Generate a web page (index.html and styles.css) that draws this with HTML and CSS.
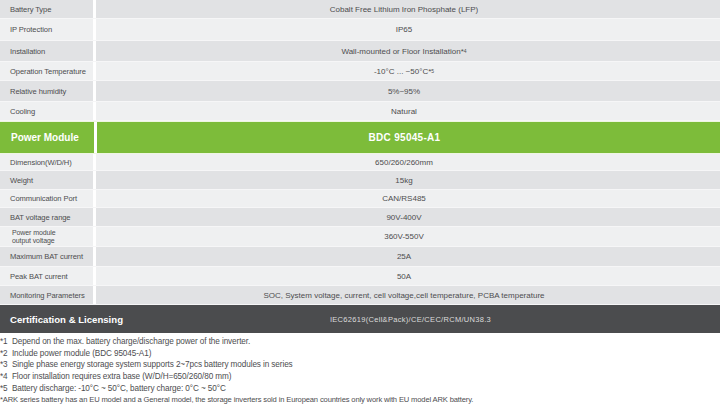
FILE: index.html
```html
<!DOCTYPE html>
<html>
<head>
<meta charset="utf-8">
<link rel="stylesheet" href="styles.css">
</head>
<body>
<div class="spec">
  <div class="row r1 dk"><div class="lbl">Battery Type</div><div class="val">Cobalt Free Lithium Iron Phosphate (LFP)</div></div>
  <div class="row r2 lt"><div class="lbl">IP Protection</div><div class="val">IP65</div></div>
  <div class="row r3 dk"><div class="lbl">Installation</div><div class="val">Wall-mounted or Floor Installation*<sup>4</sup></div></div>
  <div class="row r4 lt"><div class="lbl">Operation Temperature</div><div class="val">-10°C ... ~50°C*<sup>5</sup></div></div>
  <div class="row r5 dk"><div class="lbl">Relative humidity</div><div class="val">5%~95%</div></div>
  <div class="row r6 lt"><div class="lbl">Cooling</div><div class="val">Natural</div></div>
  <div class="row head green"><div class="lbl">Power Module</div><div class="val">BDC 95045-A1</div></div>
  <div class="row r7 lt"><div class="lbl">Dimension(W/D/H)</div><div class="val">650/260/260mm</div></div>
  <div class="row r8 dk"><div class="lbl">Weight</div><div class="val">15kg</div></div>
  <div class="row r9 lt"><div class="lbl">Communication Port</div><div class="val">CAN/RS485</div></div>
  <div class="row r10 dk"><div class="lbl">BAT voltage range</div><div class="val">90V-400V</div></div>
  <div class="row r11 lt"><div class="lbl two"><span>Power module</span><span>output voltage</span></div><div class="val">360V-550V</div></div>
  <div class="row r12 dk"><div class="lbl">Maximum BAT current</div><div class="val">25A</div></div>
  <div class="row r13 lt"><div class="lbl">Peak BAT current</div><div class="val">50A</div></div>
  <div class="row r14 dk"><div class="lbl">Monitoring Parameters</div><div class="val">SOC, System voltage, current, cell voltage,cell temperature, PCBA temperature</div></div>
  <div class="row cert"><div class="lbl">Certification &amp; Licensing</div><div class="val">IEC62619(Cell&amp;Pack)/CE/CEC/RCM/UN38.3</div></div>
</div>
<div class="notes">
  <p>*1&nbsp; Depend on the max. battery charge/discharge power of the inverter.</p>
  <p>*2&nbsp; Include power module (BDC 95045-A1)</p>
  <p>*3&nbsp; Single phase energy storage system supports 2~7pcs battery modules in series</p>
  <p>*4&nbsp; Floor installation requires extra base (W/D/H=650/260/80 mm)</p>
  <p>*5&nbsp; Battery discharge: -10°C ~ 50°C, battery charge: 0°C ~ 50°C</p>
  <p class="small">*ARK series battery has an EU model and a General model, the storage inverters sold in European countries only work with EU model ARK battery.</p>
</div>
</body>
</html>
```
FILE: styles.css
```css
html, body {
  margin: 0;
  padding: 0;
  background: #ffffff;
}
body {
  width: 720px;
  height: 404px;
  overflow: hidden;
  font-family: "Liberation Sans", Arial, sans-serif;
  color: #4d4d4f;
}
.spec {
  display: flex;
  flex-direction: column;
}
.row {
  display: flex;
  align-items: stretch;
  height: 19px;
}
.lbl {
  width: 83px;
  flex: none;
  padding-left: 10px;
  display: flex;
  align-items: center;
  font-size: 7.6px;
  letter-spacing: -0.1px;
  white-space: nowrap;
}
.val {
  flex: 1;
  margin-left: 3px;
  display: flex;
  align-items: center;
  justify-content: center;
  font-size: 8px;
  white-space: nowrap;
  padding-right: 8px;
}
.val sup {
  font-size: 5px;
  vertical-align: 3px;
  line-height: 0;
}
.dk .lbl, .dk .val { background: #e1e2e4; }
.lt .lbl, .lt .val { background: #eff0f1; }
.row.dk, .row.lt { border-bottom: 1px solid #f6f6f7; box-sizing: border-box; }
.r1 { height: 19px; }
.r2 { height: 22px; }
.r3 { height: 21px; }
.r4 { height: 19px; }
.r5 { height: 21px; }
.r6 { height: 19px; }
.r7 { height: 17px; }
.r8 { height: 19px; }
.r9 { height: 18px; }
.r10 { height: 19px; }
.r11 { height: 20px; }
.r12 { height: 20px; }
.r13 { height: 19px; }
.r14 { height: 19px; }
.lbl.two {
  flex-direction: column;
  align-items: flex-start;
  justify-content: center;
  padding-left: 12px;
  width: 81px;
  line-height: 7.6px;
  font-size: 7px;
}
.head {
  height: 31px;
  border-top: 1px solid #eef6e2;
  border-bottom: 1px solid #eef6e2;
}
.head .lbl, .head .val {
  background: #7dbc3a;
  color: #ffffff;
  font-weight: bold;
}
.head .lbl {
  font-size: 10px;
  padding-left: 11px;
  letter-spacing: 0;
}
.head .val {
  font-size: 10px;
  letter-spacing: 0.3px;
}
.cert {
  height: 28px;
  background: #4b4c4e;
}
.cert .lbl {
  width: 115px;
  color: #ffffff;
  font-size: 9.6px;
  letter-spacing: 0;
  font-weight: bold;
}
.cert .val {
  margin-left: 0;
  color: #dcdcdc;
  font-size: 7.5px;
  letter-spacing: 0.3px;
  padding-right: 24px;
}
.notes {
  padding-top: 3px;
  font-size: 8.2px;
  color: #4d4d4f;
}
.notes p {
  margin: 0;
  height: 11.7px;
  line-height: 11.7px;
  white-space: nowrap;
  letter-spacing: -0.1px;
}
.notes p.small {
  font-size: 7.6px;
  letter-spacing: -0.15px;
}
```
